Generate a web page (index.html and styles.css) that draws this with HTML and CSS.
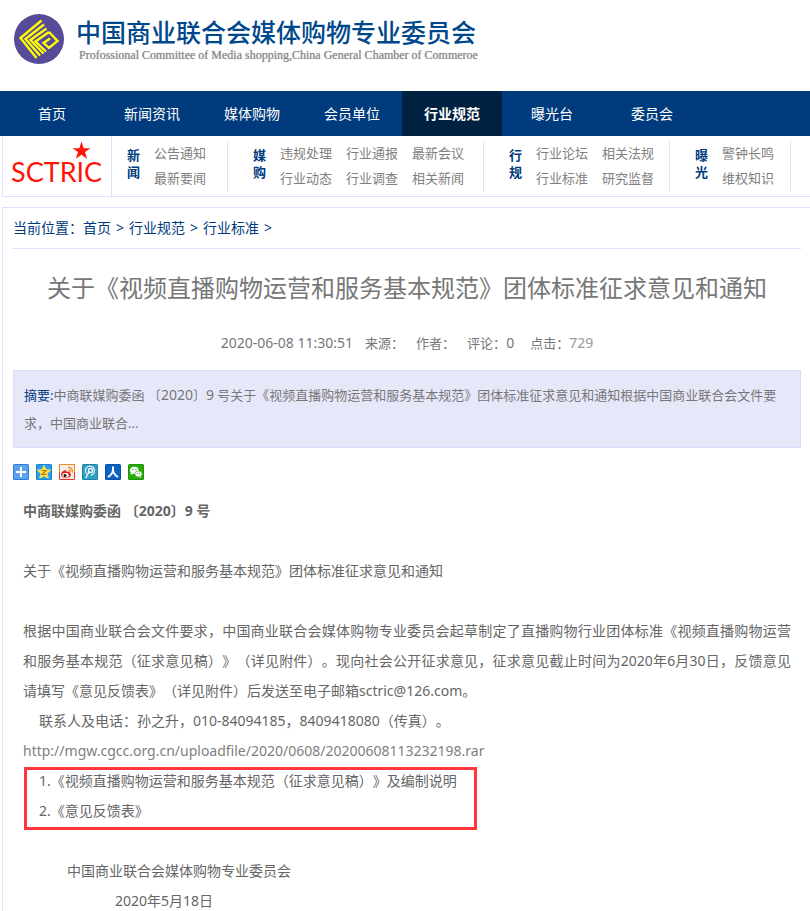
FILE: index.html
```html
<!DOCTYPE html>
<html lang="zh-CN">
<head>
  <meta charset="UTF-8">
  <meta name="viewport" content="width=device-width, initial-scale=1.0">
  <title>中国商业联合会媒体购物专业委员会</title>
  <link rel="stylesheet" href="styles.css">
</head>
<body>
  <header class="header">
    <svg class="emblem" viewBox="0 0 50 50" aria-hidden="true">
      <circle cx="25" cy="25" r="25" fill="#574a98"/>
      <g fill="none" stroke="#ffff00" stroke-width="2.400">
        <path d="M27.500 6.500 L6.500 24 L22.500 44"/>
        <path d="M30 10.500 L11.500 25 L26 41.500"/>
        <path d="M32.500 14.500 L16.500 26 L29.500 39.500"/>
        <path d="M35 18 L21.500 27.500 L32 37.500"/>
        <path d="M35 18 L43.500 27 L35 34 L29.500 29 L36 24.500"/>
      </g>
    </svg>
    <div>
      <div class="site-name">中国商业联合会媒体购物专业委员会</div>
      <div class="site-name-en">Profossional Committee of Media shopping,China General Chamber of Commeroe</div>
    </div>
  </header>

  <nav class="nav">
    <a href="#">首页</a>
    <a href="#">新闻资讯</a>
    <a href="#">媒体购物</a>
    <a href="#">会员单位</a>
    <a href="#" class="active">行业规范</a>
    <a href="#">曝光台</a>
    <a href="#">委员会</a>
  </nav>

  <div class="subnav">
    <a href="#" class="brand">
      <svg class="star" viewBox="0 0 20 20" aria-hidden="true"><path fill="#ff1408" d="M10 0.500 L12.300 7.500 H19.500 L13.700 11.700 L15.900 18.700 L10 14.400 L4.100 18.700 L6.300 11.700 L0.500 7.500 H7.700 Z"/></svg>
      <span>SCTRIC</span>
    </a>
    <div class="group">
      <strong>新闻</strong>
      <div class="links cols-1"><a href="#">公告通知</a><a href="#">最新要闻</a></div>
    </div>
    <div class="group">
      <strong>媒购</strong>
      <div class="links cols-3"><a href="#">违规处理</a><a href="#">行业通报</a><a href="#">最新会议</a><a href="#">行业动态</a><a href="#">行业调查</a><a href="#">相关新闻</a></div>
    </div>
    <div class="group">
      <strong>行规</strong>
      <div class="links cols-2"><a href="#">行业论坛</a><a href="#">相关法规</a><a href="#">行业标准</a><a href="#">研究监督</a></div>
    </div>
    <div class="group">
      <strong>曝光</strong>
      <div class="links cols-1"><a href="#">警钟长鸣</a><a href="#">维权知识</a></div>
    </div>
  </div>

  <main class="panel">
    <div class="crumbs">
      <span>当前位置：<a href="#">首页</a></span>
      <span>&gt;</span>
      <a href="#">行业规范</a>
      <span>&gt;</span>
      <a href="#">行业标准</a>
      <span>&gt;</span>
    </div>

    <h1>关于《视频直播购物运营和服务基本规范》团体标准征求意见和通知</h1>

    <div class="meta">
      <span class="num">2020-06-08 11:30:51</span>
      <span>来源：</span>
      <span>作者：</span>
      <span>评论：<span class="num">0</span></span>
      <span class="hits">点击：<span class="num">729</span></span>
    </div>

    <div class="summary"><b>摘要:</b>中商联媒购委函 〔<span class="num">2020</span>〕<span class="num">9</span> 号关于《视频直播购物运营和服务基本规范》团体标准征求意见和通知根据中国商业联合会文件要求，中国商业联合...</div>

    <!-- 分享按钮 -->
    <div class="share">
      <a href="#" aria-label="分享">
        <svg viewBox="0 0 16 16"><rect width="16" height="16" rx="1.500" fill="#2f7fd6"/><rect x="1" y="1" width="14" height="14" fill="#5ba3ee"/><path d="M8 3v10M3 8h10" stroke="#fff" stroke-width="2"/></svg>
      </a>
      <a href="#" aria-label="QQ空间">
        <svg viewBox="0 0 16 16"><rect width="16" height="16" rx="1.500" fill="#0d86d8"/><rect x="1" y="1" width="14" height="14" fill="#2b9fe9"/><path d="M8 .5l2.200 4.700 5.300.6-4 3.700 1.200 5.500L8 12.300 3.300 15l1.200-5.500-4-3.700 5.300-.6z" fill="#ffdf4a"/><path d="M5.500 6.500h4.500l-4 4h4.500" fill="none" stroke="#b87800" stroke-width="1.200"/></svg>
      </a>
      <a href="#" aria-label="新浪微博">
        <svg viewBox="0 0 16 16"><rect width="16" height="16" rx="1.500" fill="#e6341f"/><path d="M0 8V1.500Q0 0 1.500 0h13Q16 0 16 1.500V8z" fill="#f58a1f"/><rect x="1" y="1" width="14" height="14" fill="#f7eeea"/><path d="M2 11c0-3 3.500-5.500 5-4.500 1 .5.500 1.500.5 1.500 2-1 4-.5 3.300 1.300 1.500.500 1.700 2 .4 3.200-2.500 2.300-9.200 2-9.200-1.500z" fill="#e32222"/><ellipse cx="6.500" cy="11.300" rx="3.200" ry="2.200" fill="#fff"/><circle cx="6" cy="11.400" r="1.500" fill="#111"/><path d="M9 3.500q4.500-.500 4.500 5M9.500 5.800q2-.2 2 2.200" fill="none" stroke="#f58a1f" stroke-width="1.200"/></svg>
      </a>
      <a href="#" aria-label="腾讯微博">
        <svg viewBox="0 0 16 16"><rect width="16" height="16" rx="1.500" fill="#1784a8"/><rect x="1" y="1" width="14" height="14" fill="#319fc2"/><path d="M4.500 9.500A4.500 4.500 0 1 1 9 11" fill="none" stroke="#d9f2fa" stroke-width="1.300"/><circle cx="8.500" cy="6.500" r="2" fill="none" stroke="#fff" stroke-width="1.300"/><path d="M7.500 8Q4.500 10.500 4 14" fill="none" stroke="#fff" stroke-width="1.400"/></svg>
      </a>
      <a href="#" aria-label="人人网">
        <svg viewBox="0 0 16 16"><rect width="16" height="16" rx="1.500" fill="#0650a8"/><rect x="1" y="1" width="14" height="14" fill="#0b63c4"/><path d="M8 2.500V6Q7.500 10.500 3 13M8 6q.500 4.500 5 7" fill="none" stroke="#fff" stroke-width="2"/></svg>
      </a>
      <a href="#" aria-label="微信">
        <svg viewBox="0 0 16 16"><rect width="16" height="16" rx="1.500" fill="#1c9800"/><rect x="1" y="1" width="14" height="14" fill="#2aab0c"/><ellipse cx="6.300" cy="6.300" rx="4.300" ry="3.600" fill="#fff"/><path d="M3 8l-.3 3 2.500-1.500zM12 12l1.300 2-3-1z" fill="#fff"/><ellipse cx="10.500" cy="10" rx="3.700" ry="3" fill="#fff" stroke="#2aab0c" stroke-width=".6"/><g fill="#2aab0c"><circle cx="5" cy="5.500" r=".7"/><circle cx="8" cy="5.500" r=".7"/><circle cx="9.300" cy="9.300" r=".6"/><circle cx="11.700" cy="9.300" r=".6"/></g></svg>
      </a>
    </div>

    <article class="article">
      <p class="gap-after"><strong>中商联媒购委函 〔2020〕9 号</strong></p>
      <p class="gap-after">关于《视频直播购物运营和服务基本规范》团体标准征求意见和通知</p>
      <p>根据中国商业联合会文件要求，中国商业联合会媒体购物专业委员会起草制定了直播购物行业团体标准《视频直播购物运营和服务基本规范（征求意见稿）》（详见附件）。现向社会公开征求意见，征求意见截止时间为2020年6月30日，反馈意见请填写《意见反馈表》（详见附件）后发送至电子邮箱sctric@126.com。</p>
      <p class="indent">联系人及电话：孙之升，010-84094185，8409418080（传真）。</p>
      <p><a href="#">http://mgw.cgcc.org.cn/uploadfile/2020/0608/20200608113232198.rar</a></p>
      <div class="attachments gap-after">
        <p>1.《视频直播购物运营和服务基本规范（征求意见稿）》及编制说明</p>
        <p>2.《意见反馈表》</p>
      </div>
      <p class="sign">中国商业联合会媒体购物专业委员会</p>
      <p class="date">2020年5月18日</p>
    </article>
  </main>
</body>
</html>
```
FILE: styles.css
```css
* {
  box-sizing: border-box;
}

body {
  margin: 0;
  font-family: "Noto Sans", "Noto Sans CJK SC", sans-serif;
  font-size: 14px;
  color: #666;
  background-color: #fff;
  text-spacing-trim: space-all;
}

a {
  color: inherit;
  text-decoration: none;
}

p {
  margin: 0;
}

.header {
  display: flex;
  gap: 12px;
  height: 91px;
  padding: 14px 14px 0;
}

.emblem {
  width: 50px;
  height: 50px;
}

.site-name {
  font-family: "Noto Sans CJK SC", sans-serif;
  font-size: 25px;
  font-weight: 500;
  line-height: 34px;
  color: #00488c;
}

.site-name-en {
  padding-left: 3px;
  font-family: "Liberation Serif", serif;
  font-size: 12px;
  line-height: 14px;
  color: #888;
  text-shadow: 0 0 1px #aaa;
}

.nav {
  display: flex;
  padding-left: 2px;
  background-color: #003b7d;
}

.nav a {
  width: 100px;
  line-height: 45px;
  text-align: center;
  color: #fff;
}

.nav a.active {
  background-color: #00213f;
  font-weight: bold;
}

.subnav {
  display: grid;
  grid-template-columns: 109px 116px 256px 186px 121px;
  margin-left: 2px;
  border-left: 1px solid #e0deff;
  border-bottom: 1px solid #e0deff;
  font-size: 13px;
  color: #808080;
}

.brand {
  position: relative;
  height: 60px;
  padding: 20px 0 0 8px;
  border-right: 1px solid #e0deff;
  font-family: Lato, sans-serif;
  font-size: 27px;
  line-height: 32px;
  color: #ff1408;
}

.star {
  position: absolute;
  left: 69px;
  top: 5px;
  width: 19px;
  height: 19px;
}

.group {
  display: flex;
  gap: 14px;
  height: 50px;
  margin-top: 5px;
  padding-left: 25px;
  border-right: 1px solid #e0deff;
}

.brand + .group {
  padding-left: 15px;
}

.group strong {
  width: 13px;
  padding-top: 6px;
  line-height: 17px;
  color: #003b7d;
}

.links {
  display: grid;
  column-gap: 14px;
  line-height: 25px;
  white-space: nowrap;
}

.cols-1 {
  grid-template-columns: 52px;
}

.cols-2 {
  grid-template-columns: 52px 52px;
}

.cols-3 {
  grid-template-columns: 52px 52px 52px;
}

.panel {
  margin: 10px 0 0 2px;
  padding: 0 9px 0 10px;
  border-left: 1px solid #e0deff;
  border-top: 1px solid #e0deff;
}

.crumbs {
  display: flex;
  gap: 5px;
  line-height: 40px;
  border-bottom: 1px solid #e0deff;
  color: #003b7d;
}

h1 {
  margin: 20px 0 25px;
  font-size: 24px;
  font-weight: normal;
  line-height: 38px;
  text-align: center;
  color: #777;
}

.meta {
  display: flex;
  justify-content: center;
  gap: 12px;
  margin-bottom: 16px;
  font-size: 13px;
  line-height: 22px;
  color: #777;
}

.num {
  font-size: 14px;
}

.hits {
  margin-left: 4px;
}

.hits .num {
  color: #999;
}

.summary {
  padding: 10px 14px 10px 10px;
  border: 1px solid #dddcff;
  background-color: #e7e7fa;
  font-size: 13px;
  line-height: 28px;
  color: #777;
}

.summary b {
  font-weight: normal;
  color: #003b7d;
}

.share {
  display: flex;
  gap: 7px;
  padding: 16px 0;
}

.share a,
.share svg {
  display: block;
  width: 16px;
  height: 16px;
}

.article {
  padding: 0 10px;
  line-height: 30px;
  text-align: justify;
}

.article a {
  color: #808080;
}

.gap-after {
  margin-bottom: 30px;
}

.indent {
  padding-left: 16px;
}

.attachments {
  position: relative;
  padding-left: 16px;
}

/* 附件红框 */
.attachments::after {
  content: "";
  position: absolute;
  left: 1px;
  top: 1px;
  box-sizing: border-box;
  width: 453px;
  height: 63px;
  border: 3px solid #ff373c;
}

.sign {
  padding-left: 44px;
}

.date {
  padding-left: 92px;
}
```
